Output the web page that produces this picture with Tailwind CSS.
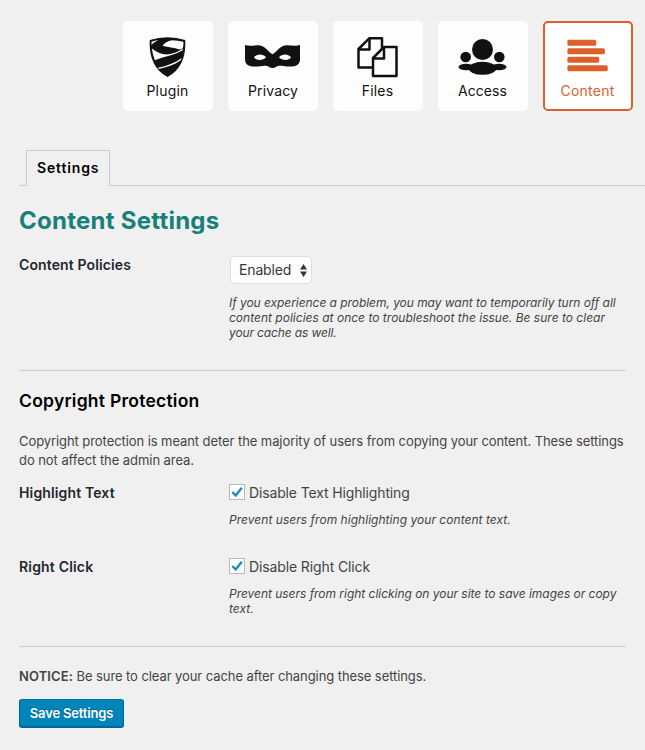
<!DOCTYPE html>
<html lang="en">
<head>
<meta charset="utf-8">
<title>Content Settings</title>
<script src="https://cdn.jsdelivr.net/npm/@tailwindcss/browser@4"></script>
</head>
<body class="h-[750px] w-[645px] overflow-hidden bg-[#f0f0f0] font-['Inter','Liberation_Sans',sans-serif] text-[#444]">
<nav class="flex gap-[15px] pt-[21px] pl-[123px] text-[14px] leading-5 text-[#111]">
  <a class="flex h-[90px] w-[90px] flex-col items-center rounded-[5px] bg-[#fdfdfd] pt-[15px]">
    <svg class="h-[42px] w-[50px] shrink-0" viewBox="0 0 50 42"><path d="M6.800 4Q24.500 -1.500 42.200 4C43.200 20 38.500 33.500 24.500 41C10.500 33.500 5.800 20 6.800 4Z" fill="#111"/><path d="M8.500 5.700Q12 4.500 15.500 4C12.500 5.500 10 7 8.600 9Z" fill="#fdfdfd"/><path d="M29 4.200Q35 4.300 40.400 5.800C40.500 8.500 40.300 10.500 39.800 12.300L36.500 13.500C31 11.500 25 11.500 19.500 9.800C21 7 25 5 29 4.200Z" fill="#fdfdfd"/><path d="M11.800 24.200Q9.500 18.500 8.900 12.500C13 16 18 18 24 18.600Q33 17.500 40 12.500L39.700 14.300C31 19.500 21 20.500 11.800 24.200Z" fill="#fdfdfd"/><path d="M15 31.800C24 30 32 27 38.600 22L37.700 24.300C31 29 24 31.500 15.700 32.900Z" fill="#fdfdfd"/></svg>
    <span class="mt-[3px] mr-px tracking-[.2px]">Plugin</span>
  </a>
  <a class="flex h-[90px] w-[90px] flex-col items-center rounded-[5px] bg-[#fdfdfd] pt-[15px]">
    <svg class="h-[42px] w-[56px] shrink-0" viewBox="0 0 56 42"><path fill="#111" fill-rule="evenodd" d="M0 9C4 10.500 9 9.300 13 9.300C20 9.300 22 15 27.500 18.300C33 15 35 9.300 42 9.300C46 9.300 51 10.500 55 9V23C55 29 51 30.500 45 30.500C38 30.500 36 29 33 30C31 30.500 30 32 27.500 32C25 32 24 30.500 22 30C19 29 17 30.500 10 30.500C4 30.500 0 29 0 23ZM9 21.300C11 25 18 25 21 21.300C18 17.500 12 17.500 9 21.300ZM34 21.300C37 25 44 25 46 21.300C43 17.500 37 17.500 34 21.300Z"/></svg>
    <span class="mt-[3px] tracking-[.15px]">Privacy</span>
  </a>
  <a class="flex h-[90px] w-[90px] flex-col items-center rounded-[5px] bg-[#fdfdfd] pt-[15px]">
    <svg class="h-[42px] w-[42px] shrink-0" viewBox="0 0 42 42" fill="none" stroke="#111" stroke-width="2.500" stroke-linejoin="round"><path d="M12.500 2.200H25V31.500H1.500V13Z"/><path d="M12.500 2.200V13.500H1.500"/><path fill="#fdfdfd" d="M27 11H39.500V40H16V22Z"/><path d="M27 11V22.500H16"/></svg>
    <span class="mt-[3px] mr-px tracking-[.2px]">Files</span>
  </a>
  <a class="flex h-[90px] w-[90px] flex-col items-center rounded-[5px] bg-[#fdfdfd] pt-[15px]">
    <svg class="h-[42px] w-[50px] shrink-0" viewBox="0 0 50 42" fill="#111"><circle cx="24.500" cy="13.500" r="10.500"/><ellipse cx="24.500" cy="32.300" rx="14" ry="6.500"/><circle cx="7.700" cy="21" r="5.300"/><circle cx="41.300" cy="21" r="5.300"/><ellipse cx="8" cy="31" rx="7.500" ry="3.300"/><ellipse cx="41" cy="31" rx="7.500" ry="3.300"/></svg>
    <span class="mt-[3px] mr-px tracking-[.1px]">Access</span>
  </a>
  <a class="flex h-[90px] w-[90px] flex-col items-center rounded-[5px] border-2 border-[#db602e] bg-white pt-[13px] text-[#db602e]">
    <svg class="h-[42px] w-[42px] shrink-0" viewBox="0 0 42 42" fill="#db602e"><rect x=".4" y="3.800" width="28.800" height="6" rx="1.500"/><rect x=".4" y="12.300" width="37.500" height="6" rx="1.500"/><rect x=".4" y="20.800" width="31.800" height="6" rx="1.500"/><rect x=".4" y="29.300" width="40.300" height="6" rx="1.500"/></svg>
    <span class="mt-[3px] mr-px tracking-[.25px]">Content</span>
  </a>
</nav>
<div class="mt-[39px] ml-[19px] flex h-9 items-end">
  <div class="w-[7px] border-b border-[#ccc]"></div>
  <div class="h-9 w-[84px] border border-b-0 border-[#ccc] pl-[10px] text-[14px] leading-[33px] font-semibold text-black"><span class="tracking-[.85px]">Settings</span></div>
  <div class="flex-1 border-b border-[#ccc]"></div>
</div>
<main class="w-[626px] pl-[19px] whitespace-nowrap">
  <h1 class="mt-[19px] text-[24px] leading-8 font-bold text-[#17807a]"><span class="tracking-[.25px]">Content Settings</span></h1>
  <section class="mt-[18px] flex h-[115px]">
    <h3 class="w-[210px] text-[14px] leading-5 font-semibold text-[#23282d]"><span class="tracking-[.12px]">Content Policies</span></h3>
    <div class="text-[12px] leading-[15px] italic">
      <div class="mt-px ml-px flex h-[28px] w-[82px] items-center justify-between rounded-[5px] border border-[#ddd] bg-white pr-[4px] pl-[8px] text-[14px] text-[#32373c] not-italic"><span class="pb-[2px] tracking-[-.15px]">Enabled</span><svg class="h-[13px] w-[7px]" viewBox="0 0 7 13" fill="#32373c"><path d="M0 5.500L3.500 0L7 5.500ZM0 7.500H7L3.500 13Z"/></svg></div>
      <p class="mt-[11px]"><span class="tracking-[-.05px]">If you experience a problem, you may want to temporarily turn off all</span><br><span class="tracking-[.01px]">content policies at once to troubleshoot the issue. Be sure to clear</span><br><span class="tracking-[-.13px]">your cache as well.</span></p>
    </div>
  </section>
  <hr class="border-[#ccc]">
  <h2 class="mt-[18px] text-[17.500px] leading-6 font-semibold text-black"><span class="tracking-[.25px]">Copyright Protection</span></h2>
  <p class="mt-[19px] text-[13px] leading-[19px]"><span class="tracking-[-.075px]">Copyright protection is meant deter the majority of users from copying your content. These settings</span><br><span class="tracking-[-.06px]">do not affect the admin area.</span></p>
  <section class="mt-[13px] flex h-[74px]">
    <h3 class="w-[210px] text-[14px] leading-5 font-semibold text-[#23282d]"><span class="tracking-[.14px]">Highlight Text</span></h3>
    <div>
      <label class="-mt-px flex h-5 items-center gap-[4px] text-[14px]"><span class="flex h-4 w-4 items-center justify-center border border-[#b4b9be] bg-white"><svg class="h-[12px] w-[12px]" viewBox="0 0 12 12" fill="none" stroke="#1e8cbe" stroke-width="2.400"><path d="M1.300 6L4.700 9.500L10.800 1.800"/></svg></span><span class="tracking-[-.14px]">Disable Text Highlighting</span></label>
      <p class="mt-[10px] text-[12px] leading-[15px] italic"><span class="tracking-[.035px]">Prevent users from highlighting your content text.</span></p>
    </div>
  </section>
  <section class="flex h-[89px]">
    <h3 class="w-[210px] text-[14px] leading-5 font-semibold text-[#23282d]"><span class="tracking-[.18px]">Right Click</span></h3>
    <div>
      <label class="-mt-px flex h-5 items-center gap-[4px] text-[14px]"><span class="flex h-4 w-4 items-center justify-center border border-[#b4b9be] bg-white"><svg class="h-[12px] w-[12px]" viewBox="0 0 12 12" fill="none" stroke="#1e8cbe" stroke-width="2.400"><path d="M1.300 6L4.700 9.500L10.800 1.800"/></svg></span><span class="tracking-[-.12px]">Disable Right Click</span></label>
      <p class="mt-[10px] text-[12px] leading-[15px] italic"><span class="tracking-[-.03px]">Prevent users from right clicking on your site to save images or copy</span><br><span class="tracking-[0px]">text.</span></p>
    </div>
  </section>
  <hr class="border-[#ccc]">
  <p class="mt-[19px] text-[13px] leading-[20px]"><b class="font-semibold tracking-[.1px]">NOTICE:</b><span class="tracking-[-.08px]"> Be sure to clear your cache after changing these settings.</span></p>
  <button class="mt-[13px] block h-[28px] w-[105px] rounded-[3px] border border-[#006799] border-t-[#0073aa] bg-[#0085ba] text-[13px] leading-[26px] font-semibold text-white shadow-[0_1px_0_#006799] [text-shadow:0_-1px_1px_#006799]"><span class="tracking-[-.17px]">Save Settings</span></button>
</main>
</body>
</html>
